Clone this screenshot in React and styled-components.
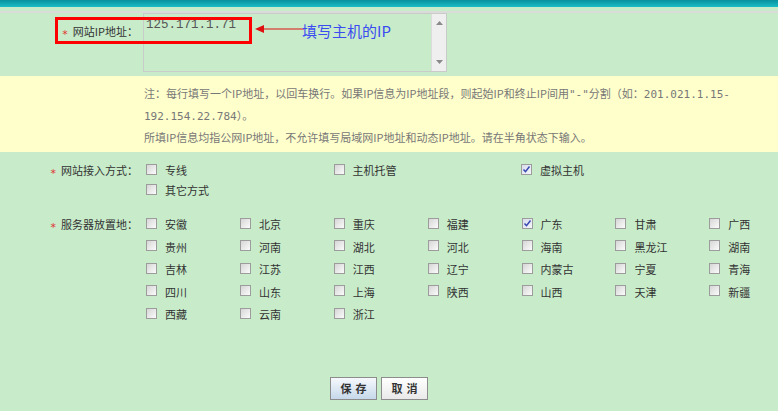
import React from 'react';
import styled, { createGlobalStyle } from 'styled-components';

const GlobalStyle = createGlobalStyle`
  body {
    margin: 0;
    background: #c8ecca;
    font-family: "Noto Sans CJK SC", sans-serif;
    font-size: 11px;
    color: #333;
  }
`;

const TopBar = styled.div`
  height: 7px;
  background: linear-gradient(#07909e, #1bbcc6);
`;

const Divider = styled.div`
  margin-top: 4px;
  height: 2px;
  background: #dadcd9;
`;

const Row = styled.div`
  display: flex;
  align-items: flex-start;
  position: relative;
`;

const IpRow = styled(Row)`
  height: 63px;
`;

const Label = styled.div`
  width: 143px;
  flex-shrink: 0;
  box-sizing: border-box;
  padding-right: 5px;
  text-align: right;
  line-height: ${(p) => p.$lh || 20}px;
  padding-top: ${(p) => p.$top || 0}px;
  white-space: nowrap;
`;

const Star = styled.span`
  display: inline-block;
  color: #e03030;
  margin-right: 5px;
  font-family: "DejaVu Sans", sans-serif;
  font-size: 11px;
  line-height: 1;
  transform: translateY(2px);
`;

const TextBox = styled.div`
  display: flex;
  width: 304px;
  height: 59px;
  box-sizing: border-box;
  border: 1px solid #c9cbc8;
`;

const Area = styled.textarea`
  flex: 1;
  border: none;
  outline: none;
  resize: none;
  background: transparent;
  overflow: hidden;
  font-family: "Liberation Mono", monospace;
  font-size: 12.5px;
  line-height: 14px;
  color: #555;
  padding: 4px 2px;
  margin: 0;
`;

const ScrollBar = styled.div`
  width: 15px;
  background: #efefef;
  border-left: 1px solid #dcdcdc;
  display: flex;
  flex-direction: column;
  justify-content: space-between;
  align-items: center;
  padding: 7px 0;
  box-sizing: border-box;
`;

const RedBox = styled.div`
  position: absolute;
  left: 55px;
  top: 4px;
  width: 197px;
  height: 27px;
  box-sizing: border-box;
  border: 3px solid #f00;
`;

const ArrowMark = styled.svg`
  position: absolute;
  left: 254px;
  top: 9px;
`;

const Hint = styled.div`
  position: absolute;
  left: 302px;
  top: 9px;
  font-size: 15px;
  line-height: 18px;
  color: #3b4cf0;
`;

const Note = styled.div`
  background: #ffffcc;
  padding: 6px 20px 4px 144px;
  height: 66px;
  line-height: 22px;
  color: #777;
`;

const Mono = styled.span`
  font-family: "DejaVu Sans Mono", monospace;
  line-height: 1;
`;

const OptionsRow = styled(Row)`
  margin-top: ${(p) => p.$mt}px;
`;

const OptionGrid = styled.div`
  display: grid;
  margin-left: 3px;
  grid-template-columns: repeat(${(p) => p.$cols}, ${(p) => p.$colWidth}px);
  grid-auto-rows: ${(p) => p.$rowHeight}px;
`;

const Option = styled.label`
  display: flex;
  align-items: center;
  gap: 8px;
  white-space: nowrap;
`;

const Box = styled.span`
  width: 11px;
  height: 11px;
  box-sizing: border-box;
  border: 1px solid #9c9c9c;
  background: ${(p) =>
    p.$checked
      ? 'linear-gradient(135deg, #d8dcec, #f4f6fb)'
      : 'linear-gradient(135deg, #d6d6d6, #fbfbfb)'};
  display: flex;
  align-items: center;
  justify-content: center;
  margin-top: -2px;
`;

const ButtonRow = styled.div`
  display: flex;
  gap: 4px;
  padding-left: 330px;
  margin-top: 51px;
`;

const Button = styled.button`
  width: 47px;
  height: 23px;
  border: 1px solid #8c8c8c;
  background: ${(p) =>
    p.$primary ? 'linear-gradient(#f6f9fd, #c6d8ea)' : 'linear-gradient(#ffffff, #e9e9e9)'};
  font-family: "Noto Sans CJK SC", sans-serif;
  font-weight: bold;
  font-size: 11px;
  letter-spacing: 4px;
  padding: 0 0 0 4px;
  color: #333;
`;

const Triangle = ({ down }) => (
  <svg width="7" height="4" viewBox="0 0 7 4">
    <path d={down ? 'M0 0h7L3.5 4z' : 'M3.5 0L7 4H0z'} fill="#8a8a8a" />
  </svg>
);

const Checkbox = ({ checked, children }) => (
  <Option>
    <Box $checked={checked}>
      {checked && (
        <svg width="9" height="9" viewBox="0 0 9 9">
          <path d="M1.5 4.5l2 2.2L7.5 1.5" stroke="#3848b0" strokeWidth="1.5" fill="none" />
        </svg>
      )}
    </Box>
    <span>{children}</span>
  </Option>
);

const access = [
  { name: '专线' },
  { name: '主机托管' },
  { name: '虚拟主机', checked: true },
  { name: '其它方式' },
];

const provinces = [
  '安徽', '北京', '重庆', '福建', '广东', '甘肃', '广西',
  '贵州', '河南', '湖北', '河北', '海南', '黑龙江', '湖南',
  '吉林', '江苏', '江西', '辽宁', '内蒙古', '宁夏', '青海',
  '四川', '山东', '上海', '陕西', '山西', '天津', '新疆',
  '西藏', '云南', '浙江',
];

export default function App() {
  return (
    <>
      <GlobalStyle />
      <TopBar />
      <Divider />
      <IpRow>
        <Label $lh={14} $top={11}>
          <Star>*</Star>网站IP地址：
        </Label>
        <TextBox>
          <Area readOnly defaultValue="125.171.1.71" />
          <ScrollBar>
            <Triangle />
            <Triangle down />
          </ScrollBar>
        </TextBox>
        <RedBox />
        <ArrowMark width="50" height="14" viewBox="0 0 50 14">
          <path d="M9 7H50" stroke="#e01010" strokeWidth="1.2" />
          <path d="M1 7L10 3v8z" fill="#e01010" />
        </ArrowMark>
        <Hint>填写主机的IP</Hint>
      </IpRow>
      <Note>
        注：每行填写一个IP地址，以回车换行。如果IP信息为IP地址段，则起始IP和终止IP间用<Mono>"-"</Mono>分割（如：<Mono>201.021.1.15-</Mono>
        <br />
        <Mono>192.154.22.784</Mono>）。
        <br />
        所填IP信息均指公网IP地址，不允许填写局域网IP地址和动态IP地址。请在半角状态下输入。
      </Note>
      <OptionsRow $mt={8}>
        <Label>
          <Star>*</Star>网站接入方式：
        </Label>
        <OptionGrid $cols={3} $colWidth={187.5} $rowHeight={20}>
          {access.map((a) => (
            <Checkbox key={a.name} checked={a.checked}>
              {a.name}
            </Checkbox>
          ))}
        </OptionGrid>
      </OptionsRow>
      <OptionsRow $mt={13}>
        <Label $lh={22.5}>
          <Star>*</Star>服务器放置地：
        </Label>
        <OptionGrid $cols={7} $colWidth={93.9} $rowHeight={22.5}>
          {provinces.map((p) => (
            <Checkbox key={p} checked={p === '广东'}>
              {p}
            </Checkbox>
          ))}
        </OptionGrid>
      </OptionsRow>
      <ButtonRow>
        <Button $primary>保存</Button>
        <Button>取消</Button>
      </ButtonRow>
    </>
  );
}
